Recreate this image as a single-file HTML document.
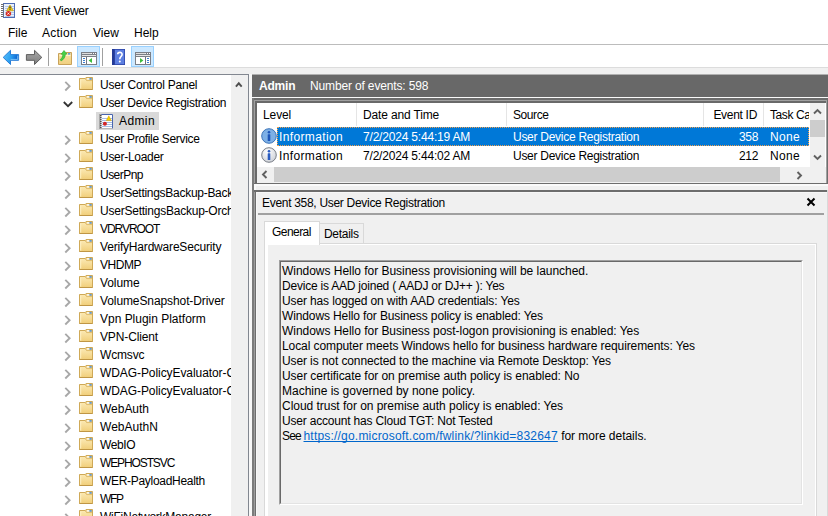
<!DOCTYPE html>
<html><head><meta charset="utf-8">
<style>
*{margin:0;padding:0;box-sizing:border-box}
html,body{width:828px;height:516px;overflow:hidden;background:#f0f0f0;font-family:"Liberation Sans",sans-serif;font-size:12px;color:#000}
.a{position:absolute}
.t{position:absolute;white-space:nowrap;line-height:15px}
#title{left:0;top:0;width:828px;height:22px;background:#fff}
#menu{left:0;top:22px;width:828px;height:22px;background:#fff}
#mline{left:0;top:44px;width:828px;height:1px;background:#bcbcbc}
#tool{left:0;top:45px;width:828px;height:22px;background:#fff}
#tstrip{left:0;top:67px;width:828px;height:7px;background:#f0f0f0;border-top:1px solid #dcdcdc}
#tline{left:0;top:74px;width:249px;height:1px;background:#828790}
#tree{left:0;top:75px;width:231px;height:441px;background:#fff;overflow:hidden}
#vsb{left:231px;top:75px;width:17px;height:441px;background:#f0f0f0}
#treeb{left:248px;top:74px;width:1px;height:442px;background:#828790}
#gap{left:249px;top:74px;width:3px;height:442px;background:#f7f7f7}
.row{position:absolute;left:0;height:18px;width:231px}
.chev{position:absolute;left:64px;top:6px}
.chev2{position:absolute;left:63px;top:8px}
.fold{position:absolute;left:79px;top:2px}
.rt{position:absolute;left:100px;top:3px;white-space:nowrap;line-height:15px}
.asel{position:absolute;left:96px;top:1px;width:63px;height:18px;background:#d9d9d9}
.aicon{position:absolute;left:99px;top:2px}
#hdr{left:252px;top:75px;width:576px;height:22px;border-top:0;background:#686868;color:#fff}
#hstrip{left:252px;top:97px;width:576px;height:1px;background:#fafafa}
#hrow74{left:252px;top:74px;width:576px;height:1px;background:#b0b0b0}
#vline{left:252px;top:98px;width:2px;height:418px;background:#7b7b7b}
#lb1{left:252px;top:98px;width:576px;height:86px;background:#6d6d6d}
#lb2{left:254px;top:100px;width:573px;height:83px;background:#a0a0a0}
#lb3{left:255px;top:101px;width:571px;height:82px;background:#696969}
#lwhite{left:257px;top:103px;width:569px;height:80px;background:#fff;overflow:hidden}
#lstrip{left:254px;top:184px;width:574px;height:6px;background:#f0f0f0;border-top:2px solid #fafafa;border-left:2px solid #fafafa}
#db1{left:252px;top:190px;width:576px;height:326px;background:#6d6d6d}
#db1b{left:254px;top:192px;width:1px;height:324px;background:#9c9c9c}
#db2{left:256px;top:192px;width:571px;height:324px;background:#f0f0f0;border-left:1px solid #f7f7f7;border-top:1px solid #f7f7f7}
#dright{left:827px;top:190px;width:1px;height:326px;background:#d9d9d9}
.sel{background:#0078d7;color:#fff}
.dl{position:absolute;left:282px;white-space:nowrap;line-height:15px}
.lnk{color:#0066cc;text-decoration:underline;text-decoration-skip-ink:none}

</style></head><body>
<svg width="0" height="0" style="position:absolute">
 <defs>
  <symbol id="folder" viewBox="0 0 14 13">
   <defs><linearGradient id="fgr" x1="0" y1="0" x2="0" y2="1"><stop offset="0" stop-color="#fbe8b2"/><stop offset="1" stop-color="#f1cf7c"/></linearGradient></defs>
   <path d="M0.5 12.5 V1.5 H6.2 L7 0.5 H13.5 V12.5 Z" fill="#eccb7a" stroke="#cfa957"/>
   <rect x="7.8" y="1.2" width="2.8" height="1.4" fill="#fff"/>
   <rect x="10.4" y="1.2" width="2.3" height="1.4" fill="#3f8ee8"/>
   <path d="M1 2 H6.3 L7.6 3.4 H13 V12 H1 Z" fill="url(#fgr)"/>
   <path d="M6.3 2.2 L7.6 3.6 H13" fill="none" stroke="#d9b564" stroke-width="0.8"/>
   <rect x="1.2" y="2.6" width="1" height="9" fill="#fdf0c6"/>
   <path d="M0.5 12.5 H13.5" stroke="#bf9645"/>
  </symbol>
  <symbol id="logicon" viewBox="0 0 15 16">
   <rect x="2" y="1" width="11.5" height="14.5" fill="#fff"/>
   <path d="M3 5.5h10M3 7.5h10M3 9.5h10M3 11.5h10M3 13.5h10" stroke="#a6bde3" stroke-width="1"/>
   <path d="M2 1.5 H13.5 V15.5" fill="none" stroke="#4a66ae" stroke-width="1"/>
   <path d="M2 15.5 H13" stroke="#b8b8b8" stroke-width="1"/>
   <rect x="0" y="1" width="2.4" height="15" fill="#a8a8a8"/>
   <path d="M1 2.5h1.5M1 4.5h1.5M1 6.5h1.5M1 8.5h1.5M1 10.5h1.5M1 12.5h1.5M1 14.5h1.5" stroke="#505050" stroke-width="1"/>
   <path d="M9.8 2.8 L12.3 7.6 H7.3 Z" fill="#f6d200" stroke="#d9a000" stroke-width="0.5" stroke-linejoin="round"/>
   <circle cx="5.9" cy="10.8" r="2" fill="#d22626"/>
  </symbol>
  <symbol id="info" viewBox="0 0 16 16">
   <defs><radialGradient id="ig" cx="0.4" cy="0.3" r="0.8"><stop offset="0" stop-color="#ffffff"/><stop offset="1" stop-color="#c8ccd4"/></radialGradient></defs>
   <circle cx="8" cy="8" r="7.3" fill="url(#ig)" stroke="#7a7f88" stroke-width="1"/>
   <circle cx="8" cy="4.2" r="1.3" fill="#2a5cc0"/>
   <rect x="6.7" y="6.3" width="2.6" height="6.7" rx="0.5" fill="#2a5cc0"/>
  </symbol>
  <symbol id="infosel" viewBox="0 0 16 16">
   <circle cx="8" cy="8" r="7.3" fill="#7db0e6" stroke="#3c74b8" stroke-width="1"/>
   <circle cx="8" cy="4.2" r="1.3" fill="#1d55b8"/>
   <rect x="6.7" y="6.3" width="2.6" height="6.7" rx="0.5" fill="#1d55b8"/>
  </symbol>
 </defs>
</svg>
<div id="title" class="a"></div>
<svg class="a" style="left:0px;top:0px" width="18" height="20" viewBox="0 0 18 20">
  <rect x="3.5" y="3.5" width="11" height="14" fill="#eaf1fc" stroke="#4f6db5"/>
  <path d="M5 6.5h9M5 8.5h9M5 10.5h9M5 12.5h9M5 14.5h9M5 16.5h9" stroke="#b4c8ea" stroke-width="1"/>
  <path d="M1 4.5h3M1 6.5h3M1 8.5h3M1 10.5h3M1 12.5h3M1 14.5h3M1 16.5h3" stroke="#707070" stroke-width="1"/>
  <path d="M10 5 L13.4 10.8 H6.6 Z" fill="#f2cc14" stroke="#c09a00" stroke-width="0.6" stroke-linejoin="round"/>
  <path d="M10 6.6 V8.6 M10 9.3 V10" stroke="#222" stroke-width="1.1"/>
  <circle cx="8.4" cy="13.6" r="2.7" fill="#d42a22"/>
  <path d="M7.4 12.6l2 2M9.4 12.6l-2 2" stroke="#fff" stroke-width="0.9"/>
</svg>
<div class="t" style="left:21px;top:4px;letter-spacing:-0.25px">Event Viewer</div>

<div id="menu" class="a"></div>
<div class="t" style="left:8px;top:26px">File</div>
<div class="t" style="left:42px;top:26px;letter-spacing:0.25px">Action</div>
<div class="t" style="left:93px;top:26px">View</div>
<div class="t" style="left:134px;top:26px">Help</div>
<div id="mline" class="a"></div>

<div id="tool" class="a"></div>
<div id="tstrip" class="a"></div>
<div id="tline" class="a"></div>

<div id="tree" class="a">
<div class="row" style="top:0px"><svg class="chev" width="8" height="11" viewBox="0 0 8 11"><path d="M1.3 0.9 L5.6 5.2 L1.3 9.5" fill="none" stroke="#a8a8a8" stroke-width="1.9"/></svg><svg class="fold" width="14" height="13"><use href="#folder"/></svg><div class="rt" style="letter-spacing:-0.227px">User Control Panel</div></div>
<div class="row" style="top:18px"><svg class="chev2" width="10" height="7" viewBox="0 0 10 7"><path d="M0.8 1 L5 5.2 L9.2 1" fill="none" stroke="#333" stroke-width="1.8"/></svg><svg class="fold" width="14" height="13"><use href="#folder"/></svg><div class="rt" style="letter-spacing:-0.272px">User Device Registration</div></div>
<div class="row" style="top:36px"><div class="asel"></div><svg class="aicon" width="15" height="16"><use href="#logicon"/></svg><div class="rt" style="left:119px;letter-spacing:0.397px">Admin</div></div>
<div class="row" style="top:54px"><svg class="chev" width="8" height="11" viewBox="0 0 8 11"><path d="M1.3 0.9 L5.6 5.2 L1.3 9.5" fill="none" stroke="#a8a8a8" stroke-width="1.9"/></svg><svg class="fold" width="14" height="13"><use href="#folder"/></svg><div class="rt" style="letter-spacing:-0.327px">User Profile Service</div></div>
<div class="row" style="top:72px"><svg class="chev" width="8" height="11" viewBox="0 0 8 11"><path d="M1.3 0.9 L5.6 5.2 L1.3 9.5" fill="none" stroke="#a8a8a8" stroke-width="1.9"/></svg><svg class="fold" width="14" height="13"><use href="#folder"/></svg><div class="rt" style="letter-spacing:-0.291px">User-Loader</div></div>
<div class="row" style="top:90px"><svg class="chev" width="8" height="11" viewBox="0 0 8 11"><path d="M1.3 0.9 L5.6 5.2 L1.3 9.5" fill="none" stroke="#a8a8a8" stroke-width="1.9"/></svg><svg class="fold" width="14" height="13"><use href="#folder"/></svg><div class="rt" style="letter-spacing:-0.527px">UserPnp</div></div>
<div class="row" style="top:108px"><svg class="chev" width="8" height="11" viewBox="0 0 8 11"><path d="M1.3 0.9 L5.6 5.2 L1.3 9.5" fill="none" stroke="#a8a8a8" stroke-width="1.9"/></svg><svg class="fold" width="14" height="13"><use href="#folder"/></svg><div class="rt" style="letter-spacing:-0.280px">UserSettingsBackup-Backup</div></div>
<div class="row" style="top:126px"><svg class="chev" width="8" height="11" viewBox="0 0 8 11"><path d="M1.3 0.9 L5.6 5.2 L1.3 9.5" fill="none" stroke="#a8a8a8" stroke-width="1.9"/></svg><svg class="fold" width="14" height="13"><use href="#folder"/></svg><div class="rt" style="letter-spacing:-0.230px">UserSettingsBackup-Orchestrator</div></div>
<div class="row" style="top:144px"><svg class="chev" width="8" height="11" viewBox="0 0 8 11"><path d="M1.3 0.9 L5.6 5.2 L1.3 9.5" fill="none" stroke="#a8a8a8" stroke-width="1.9"/></svg><svg class="fold" width="14" height="13"><use href="#folder"/></svg><div class="rt" style="letter-spacing:-1.062px">VDRVROOT</div></div>
<div class="row" style="top:162px"><svg class="chev" width="8" height="11" viewBox="0 0 8 11"><path d="M1.3 0.9 L5.6 5.2 L1.3 9.5" fill="none" stroke="#a8a8a8" stroke-width="1.9"/></svg><svg class="fold" width="14" height="13"><use href="#folder"/></svg><div class="rt" style="letter-spacing:-0.190px">VerifyHardwareSecurity</div></div>
<div class="row" style="top:180px"><svg class="chev" width="8" height="11" viewBox="0 0 8 11"><path d="M1.3 0.9 L5.6 5.2 L1.3 9.5" fill="none" stroke="#a8a8a8" stroke-width="1.9"/></svg><svg class="fold" width="14" height="13"><use href="#folder"/></svg><div class="rt" style="letter-spacing:-0.429px">VHDMP</div></div>
<div class="row" style="top:198px"><svg class="chev" width="8" height="11" viewBox="0 0 8 11"><path d="M1.3 0.9 L5.6 5.2 L1.3 9.5" fill="none" stroke="#a8a8a8" stroke-width="1.9"/></svg><svg class="fold" width="14" height="13"><use href="#folder"/></svg><div class="rt" style="letter-spacing:-0.089px">Volume</div></div>
<div class="row" style="top:216px"><svg class="chev" width="8" height="11" viewBox="0 0 8 11"><path d="M1.3 0.9 L5.6 5.2 L1.3 9.5" fill="none" stroke="#a8a8a8" stroke-width="1.9"/></svg><svg class="fold" width="14" height="13"><use href="#folder"/></svg><div class="rt" style="letter-spacing:-0.097px">VolumeSnapshot-Driver</div></div>
<div class="row" style="top:234px"><svg class="chev" width="8" height="11" viewBox="0 0 8 11"><path d="M1.3 0.9 L5.6 5.2 L1.3 9.5" fill="none" stroke="#a8a8a8" stroke-width="1.9"/></svg><svg class="fold" width="14" height="13"><use href="#folder"/></svg><div class="rt" style="letter-spacing:-0.014px">Vpn Plugin Platform</div></div>
<div class="row" style="top:252px"><svg class="chev" width="8" height="11" viewBox="0 0 8 11"><path d="M1.3 0.9 L5.6 5.2 L1.3 9.5" fill="none" stroke="#a8a8a8" stroke-width="1.9"/></svg><svg class="fold" width="14" height="13"><use href="#folder"/></svg><div class="rt" style="letter-spacing:-0.136px">VPN-Client</div></div>
<div class="row" style="top:270px"><svg class="chev" width="8" height="11" viewBox="0 0 8 11"><path d="M1.3 0.9 L5.6 5.2 L1.3 9.5" fill="none" stroke="#a8a8a8" stroke-width="1.9"/></svg><svg class="fold" width="14" height="13"><use href="#folder"/></svg><div class="rt" style="letter-spacing:-0.171px">Wcmsvc</div></div>
<div class="row" style="top:288px"><svg class="chev" width="8" height="11" viewBox="0 0 8 11"><path d="M1.3 0.9 L5.6 5.2 L1.3 9.5" fill="none" stroke="#a8a8a8" stroke-width="1.9"/></svg><svg class="fold" width="14" height="13"><use href="#folder"/></svg><div class="rt" style="letter-spacing:-0.076px">WDAG-PolicyEvaluator-CSP</div></div>
<div class="row" style="top:306px"><svg class="chev" width="8" height="11" viewBox="0 0 8 11"><path d="M1.3 0.9 L5.6 5.2 L1.3 9.5" fill="none" stroke="#a8a8a8" stroke-width="1.9"/></svg><svg class="fold" width="14" height="13"><use href="#folder"/></svg><div class="rt" style="letter-spacing:-0.076px">WDAG-PolicyEvaluator-CSP</div></div>
<div class="row" style="top:324px"><svg class="chev" width="8" height="11" viewBox="0 0 8 11"><path d="M1.3 0.9 L5.6 5.2 L1.3 9.5" fill="none" stroke="#a8a8a8" stroke-width="1.9"/></svg><svg class="fold" width="14" height="13"><use href="#folder"/></svg><div class="rt" style="letter-spacing:-0.022px">WebAuth</div></div>
<div class="row" style="top:342px"><svg class="chev" width="8" height="11" viewBox="0 0 8 11"><path d="M1.3 0.9 L5.6 5.2 L1.3 9.5" fill="none" stroke="#a8a8a8" stroke-width="1.9"/></svg><svg class="fold" width="14" height="13"><use href="#folder"/></svg><div class="rt" style="letter-spacing:0.023px">WebAuthN</div></div>
<div class="row" style="top:360px"><svg class="chev" width="8" height="11" viewBox="0 0 8 11"><path d="M1.3 0.9 L5.6 5.2 L1.3 9.5" fill="none" stroke="#a8a8a8" stroke-width="1.9"/></svg><svg class="fold" width="14" height="13"><use href="#folder"/></svg><div class="rt" style="letter-spacing:-0.365px">WebIO</div></div>
<div class="row" style="top:378px"><svg class="chev" width="8" height="11" viewBox="0 0 8 11"><path d="M1.3 0.9 L5.6 5.2 L1.3 9.5" fill="none" stroke="#a8a8a8" stroke-width="1.9"/></svg><svg class="fold" width="14" height="13"><use href="#folder"/></svg><div class="rt" style="letter-spacing:-1.114px">WEPHOSTSVC</div></div>
<div class="row" style="top:396px"><svg class="chev" width="8" height="11" viewBox="0 0 8 11"><path d="M1.3 0.9 L5.6 5.2 L1.3 9.5" fill="none" stroke="#a8a8a8" stroke-width="1.9"/></svg><svg class="fold" width="14" height="13"><use href="#folder"/></svg><div class="rt" style="letter-spacing:-0.303px">WER-PayloadHealth</div></div>
<div class="row" style="top:414px"><svg class="chev" width="8" height="11" viewBox="0 0 8 11"><path d="M1.3 0.9 L5.6 5.2 L1.3 9.5" fill="none" stroke="#a8a8a8" stroke-width="1.9"/></svg><svg class="fold" width="14" height="13"><use href="#folder"/></svg><div class="rt" style="letter-spacing:-1.324px">WFP</div></div>
<div class="row" style="top:432px"><svg class="chev" width="8" height="11" viewBox="0 0 8 11"><path d="M1.3 0.9 L5.6 5.2 L1.3 9.5" fill="none" stroke="#a8a8a8" stroke-width="1.9"/></svg><svg class="fold" width="14" height="13"><use href="#folder"/></svg><div class="rt" style="letter-spacing:-0.242px">WiFiNetworkManager</div></div>
</div>
<div id="vsb" class="a">
 <svg class="a" style="left:4px;top:6px" width="8" height="7" viewBox="0 0 8 7"><path d="M0.9 5.6 L3.8 2.3 L6.7 5.6" fill="none" stroke="#505050" stroke-width="1.9"/></svg>
</div>
<div id="treeb" class="a"></div>
<div id="gap" class="a"></div>

<div id="hdr" class="a">
 <div class="t" style="left:7px;top:4px;font-weight:bold;letter-spacing:-0.2px">Admin</div>
 <div class="t" style="left:58px;top:4px;letter-spacing:-0.15px">Number of events: 598</div>
</div>
<div id="hstrip" class="a"></div>
<div id="hrow74" class="a"></div>
<div id="lb1" class="a"></div>
<div id="lb2" class="a"></div>
<div id="lb3" class="a"></div>
<div id="lwhite" class="a"></div>
<div id="lstrip" class="a"></div>
<div id="db1" class="a"></div>
<div id="db1b" class="a"></div>
<div id="db2" class="a"></div>
<div id="dright" class="a"></div>
<div id="vline" class="a"></div>
<!-- LIST -->
<div class="a" style="left:356px;top:103px;width:1px;height:23px;background:#e5e5e5"></div>
<div class="a" style="left:506px;top:103px;width:1px;height:23px;background:#e5e5e5"></div>
<div class="a" style="left:703px;top:103px;width:1px;height:23px;background:#e5e5e5"></div>
<div class="a" style="left:763px;top:103px;width:1px;height:23px;background:#e5e5e5"></div>
<div class="t" style="left:263px;top:108px;letter-spacing:-0.1px">Level</div>
<div class="t" style="left:363px;top:108px;letter-spacing:-0.15px">Date and Time</div>
<div class="t" style="left:513px;top:108px;letter-spacing:-0.42px">Source</div>
<div class="t" style="left:711px;top:108px;width:46px;text-align:right;letter-spacing:-0.3px">Event ID</div>
<div class="t" style="left:770px;top:108px;letter-spacing:-0.4px">Task Ca</div>

<div class="a sel" style="left:277px;top:127px;width:532px;height:19px;border:1px dotted #f0a050"></div>
<svg class="a" style="left:261px;top:128px" width="16" height="16"><use href="#infosel"/></svg>
<div class="t" style="left:279px;top:130px;color:#fff;letter-spacing:0.36px">Information</div>
<div class="t" style="left:363px;top:130px;color:#fff;letter-spacing:-0.19px">7/2/2024 5:44:19 AM</div>
<div class="t" style="left:513px;top:130px;color:#fff;letter-spacing:-0.275px">User Device Registration</div>
<div class="t" style="left:718px;top:130px;width:40px;text-align:right;color:#fff;letter-spacing:-0.35px">358</div>
<div class="t" style="left:770px;top:130px;color:#fff;letter-spacing:0.3px">None</div>

<svg class="a" style="left:261px;top:147px" width="16" height="16"><use href="#info"/></svg>
<div class="t" style="left:279px;top:149px;letter-spacing:0.36px">Information</div>
<div class="t" style="left:363px;top:149px;letter-spacing:-0.19px">7/2/2024 5:44:02 AM</div>
<div class="t" style="left:513px;top:149px;letter-spacing:-0.275px">User Device Registration</div>
<div class="t" style="left:718px;top:149px;width:40px;text-align:right;letter-spacing:-0.35px">212</div>
<div class="t" style="left:770px;top:149px;letter-spacing:0.3px">None</div>
<div class="a" style="left:809px;top:103px;width:17px;height:80px;background:#fff"></div>
<!-- v scrollbar -->
<div class="a" style="left:810px;top:103px;width:15px;height:64px;background:#f0f0f0"></div>
<div class="a" style="left:810px;top:120px;width:15px;height:17px;background:#cdcdcd"></div>
<svg class="a" style="left:813px;top:108px" width="9" height="7" viewBox="0 0 9 7"><path d="M1 5.5 L4.5 2 L8 5.5" fill="none" stroke="#606060" stroke-width="1.9"/></svg>
<svg class="a" style="left:813px;top:154px" width="9" height="7" viewBox="0 0 9 7"><path d="M1 1.5 L4.5 5 L8 1.5" fill="none" stroke="#606060" stroke-width="1.9"/></svg>
<!-- h scrollbar -->
<div class="a" style="left:257px;top:167px;width:569px;height:16px;background:#f0f0f0"></div>
<div class="a" style="left:274px;top:167px;width:506px;height:15px;background:#cdcdcd"></div>
<svg class="a" style="left:261px;top:170px" width="7" height="9" viewBox="0 0 7 9"><path d="M5.5 1 L2 4.5 L5.5 8" fill="none" stroke="#606060" stroke-width="1.9"/></svg>
<svg class="a" style="left:796px;top:171px" width="7" height="9" viewBox="0 0 7 9"><path d="M1.5 1 L5 4.5 L1.5 8" fill="none" stroke="#606060" stroke-width="1.9"/></svg>
<!-- TOOLBAR -->
<svg class="a" style="left:2px;top:49px" width="18" height="17" viewBox="0 0 18 17">
 <defs><linearGradient id="bg1" x1="0" y1="0" x2="1" y2="0.3"><stop offset="0" stop-color="#5cc4fa"/><stop offset="0.6" stop-color="#2a9ef0"/><stop offset="1" stop-color="#0b62d0"/></linearGradient></defs>
 <path d="M1.2 8.4 L8.5 1.3 V5.6 H16.6 V11.3 H8.5 V15.5 Z" fill="url(#bg1)" stroke="#2a7fd8" stroke-width="1" stroke-linejoin="round"/>
 <path d="M8.6 10.4 H15.7 V6.6" fill="none" stroke="#8fd0fa" stroke-width="0.8"/>
</svg>
<svg class="a" style="left:25px;top:49px" width="18" height="17" viewBox="0 0 18 17">
 <defs><linearGradient id="fg1" x1="0" y1="0" x2="0" y2="1"><stop offset="0" stop-color="#a8a8a8"/><stop offset="1" stop-color="#7c7c7c"/></linearGradient></defs>
 <path d="M16.8 8.4 L9.5 1.3 V5.6 H1.4 V11.3 H9.5 V15.5 Z" fill="url(#fg1)" stroke="#5e5e5e" stroke-width="1" stroke-linejoin="round"/>
</svg>
<div class="a" style="left:48px;top:48px;width:1px;height:18px;background:#a0a0a0"></div>
<svg class="a" style="left:57px;top:49px" width="16" height="17" viewBox="0 0 16 17">
 <defs><linearGradient id="fug" x1="0" y1="0" x2="0" y2="1"><stop offset="0" stop-color="#f9e3a6"/><stop offset="1" stop-color="#f0cf7f"/></linearGradient></defs>
 <path d="M1.5 4.5 H8 L9 3.5 H14.5 V15.5 H1.5 Z" fill="url(#fug)" stroke="#c8a25a"/>
 <path d="M2.5 6.5 H13.5" stroke="#fdf1cc" stroke-width="1"/>
 <rect x="11" y="4.2" width="2.2" height="1.3" fill="#3f8ee8"/>
 <path d="M7 1.5 L9.9 5 L8.4 5.2 C8.3 8 6.6 10.6 4.2 11.9 L3.1 10.8 C5 9.3 5.8 7.5 5.8 5.3 L4.2 5.2 Z" fill="#48d048" stroke="#2aa82a" stroke-width="0.6" stroke-linejoin="round"/>
</svg>
<div class="a" style="left:77px;top:46px;width:23px;height:21px;background:#cce8ff;border:1px solid #99d1ff"></div>
<svg class="a" style="left:81px;top:52px" width="16" height="13" viewBox="0 0 16 13">
 <rect x="0.5" y="0.5" width="15" height="12" fill="#fff" stroke="#7b7f87"/>
 <path d="M1 1.5 H10.5" stroke="#dedede"/>
 <path d="M1 2.5 H15 M1 4.5 H15" stroke="#7b7f87"/>
 <path d="M1 3.5 H15" stroke="#e6e6e6"/>
 <rect x="11" y="1" width="1" height="1" fill="#7b7f87"/><rect x="13" y="1" width="1" height="1" fill="#7b7f87"/>
 <path d="M5.5 5 V12" stroke="#6f7480"/>
 <path d="M2 6.5 H4 M2 8.5 H4 M2 10.5 H4" stroke="#3d7fd0"/>
 <path d="M11 6 L7.6 8.5 L11 11 Z" fill="#3cbf3c"/>
</svg>
<div class="a" style="left:102px;top:48px;width:1px;height:18px;background:#a0a0a0"></div>
<svg class="a" style="left:112px;top:49px" width="13" height="16" viewBox="0 0 13 16">
 <rect x="0" y="0" width="13" height="16" fill="#2f46a8"/>
 <rect x="3" y="0.8" width="9.2" height="14.4" fill="#5c7ee0"/>
 <rect x="0" y="0" width="2.4" height="16" fill="#233a96"/>
 <path d="M5.7 5.3 C5.7 2.9 10.1 2.6 10.1 5.3 C10.1 7.5 7.8 7.7 7.8 10.3" fill="none" stroke="#fff" stroke-width="1.6"/>
 <circle cx="7.8" cy="12.4" r="1" fill="#fff"/>
</svg>
<div class="a" style="left:131px;top:46px;width:23px;height:21px;background:#cce8ff;border:1px solid #99d1ff"></div>
<svg class="a" style="left:135px;top:52px" width="16" height="13" viewBox="0 0 16 13">
 <rect x="0.5" y="0.5" width="15" height="12" fill="#fff" stroke="#7b7f87"/>
 <path d="M1 1.5 H10.5" stroke="#dedede"/>
 <path d="M1 2.5 H15 M1 4.5 H15" stroke="#7b7f87"/>
 <path d="M1 3.5 H15" stroke="#e6e6e6"/>
 <rect x="11" y="1" width="1" height="1" fill="#7b7f87"/><rect x="13" y="1" width="1" height="1" fill="#7b7f87"/>
 <path d="M10.5 5 V12" stroke="#6f7480"/>
 <path d="M12 6.5 H14 M12 8.5 H14 M12 10.5 H14" stroke="#3d7fd0"/>
 <path d="M5 6 L8.4 8.5 L5 11 Z" fill="#3cbf3c"/>
</svg>

<!-- DETAIL HEADER -->
<div class="t" style="left:262px;top:196px;letter-spacing:-0.3px">Event 358, User Device Registration</div>
<svg class="a" style="left:806px;top:197px" width="10" height="10" viewBox="0 0 10 10"><path d="M1.5 1.5 L8.5 8.5 M8.5 1.5 L1.5 8.5" stroke="#000" stroke-width="2"/></svg>
<div class="a" style="left:258px;top:213px;width:566px;height:2px;background:#a0a0a0"></div>
<!-- TABS -->
<div class="a" style="left:264px;top:243px;width:553px;height:273px;background:#fff;border:1px solid #d9d9d9;border-bottom:none"></div>
<div class="a" style="left:268px;top:245px;width:547px;height:271px;background:#f0f0f0"></div>
<div class="a" style="left:319px;top:223px;width:45px;height:21px;background:#f0f0f0;border:1px solid #d9d9d9"></div>
<div class="a" style="left:264px;top:221px;width:56px;height:24px;background:#fff;border:1px solid #d9d9d9;border-bottom:none"></div>
<div class="t" style="left:272px;top:225px;letter-spacing:-0.55px">General</div>
<div class="t" style="left:324px;top:227px;letter-spacing:-0.3px">Details</div>
<!-- TEXTBOX -->
<div class="a" style="left:279px;top:260px;width:524px;height:245px;border-top:1px solid #a0a0a0;border-left:1px solid #a0a0a0;border-right:1px solid #fff;border-bottom:1px solid #fff"></div>
<div class="a" style="left:280px;top:261px;width:522px;height:243px;border-top:1px solid #696969;border-left:1px solid #696969;border-right:1px solid #e3e3e3;border-bottom:1px solid #e3e3e3"></div>

<div class="dl" style="top:264px;letter-spacing:-0.033px">Windows Hello for Business provisioning will be launched.</div>
<div class="dl" style="top:279px;letter-spacing:-0.216px">Device is AAD joined ( AADJ or DJ++ ): Yes</div>
<div class="dl" style="top:294px;letter-spacing:-0.134px">User has logged on with AAD credentials: Yes</div>
<div class="dl" style="top:309px;letter-spacing:-0.119px">Windows Hello for Business policy is enabled: Yes</div>
<div class="dl" style="top:324px;letter-spacing:-0.036px">Windows Hello for Business post-logon provisioning is enabled: Yes</div>
<div class="dl" style="top:339px;letter-spacing:-0.088px">Local computer meets Windows hello for business hardware requirements: Yes</div>
<div class="dl" style="top:354px;letter-spacing:-0.109px">User is not connected to the machine via Remote Desktop: Yes</div>
<div class="dl" style="top:369px;letter-spacing:-0.059px">User certificate for on premise auth policy is enabled: No</div>
<div class="dl" style="top:384px;letter-spacing:-0.007px">Machine is governed by none policy.</div>
<div class="dl" style="top:399px;letter-spacing:-0.034px">Cloud trust for on premise auth policy is enabled: Yes</div>
<div class="dl" style="top:414px;letter-spacing:-0.191px">User account has Cloud TGT: Not Tested</div>
<div class="dl" style="top:429px"><span style="letter-spacing:-0.8px">See </span><span class="lnk" style="letter-spacing:0.2px">https://go.microsoft.com/fwlink/?linkid=832647</span><span style="letter-spacing:-0.03px"> for more details.</span></div>

</body></html>
